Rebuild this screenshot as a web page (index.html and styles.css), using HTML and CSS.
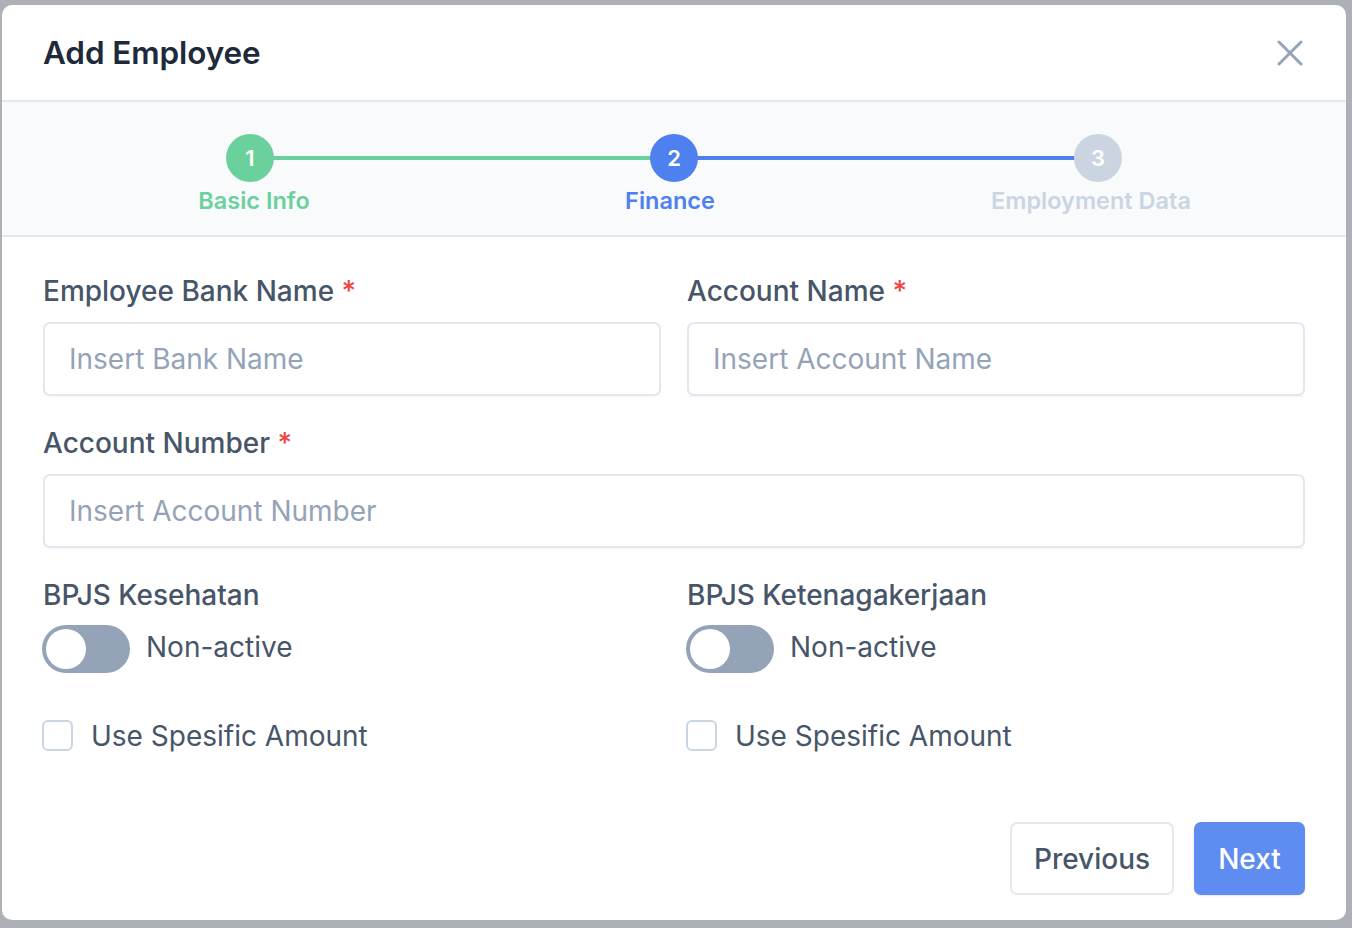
FILE: index.html
```html
<!DOCTYPE html>
<html lang="en">
<head>
<meta charset="utf-8">
<title>Add Employee</title>
<link rel="stylesheet" href="styles.css">
</head>
<body>
<div class="overlay">
  <div class="modal">
    <header class="modal-header">
      <h2 class="modal-title">Add Employee</h2>
      <button class="close-btn" aria-label="Close">
        <svg width="26" height="26" viewBox="0 0 26 26" fill="none" stroke="#94a3b8" stroke-width="3" stroke-linecap="round"><line x1="2" y1="2" x2="24" y2="24"/><line x1="24" y1="2" x2="2" y2="24"/></svg>
      </button>
    </header>

    <div class="stepper">
      <div class="step step-done">
        <div class="step-circle">1</div>
        <div class="step-label">Basic Info</div>
      </div>
      <div class="step step-active">
        <div class="step-circle">2</div>
        <div class="step-label">Finance</div>
      </div>
      <div class="step step-todo">
        <div class="step-circle">3</div>
        <div class="step-label">Employment Data</div>
      </div>
    </div>

    <div class="modal-body">
      <div class="row two">
        <div class="field">
          <label class="label">Employee Bank Name <span class="req">*</span></label>
          <input class="input" type="text" placeholder="Insert Bank Name">
        </div>
        <div class="field">
          <label class="label">Account Name <span class="req">*</span></label>
          <input class="input" type="text" placeholder="Insert Account Name">
        </div>
      </div>
      <div class="row">
        <div class="field">
          <label class="label">Account Number <span class="req">*</span></label>
          <input class="input" type="text" placeholder="Insert Account Number">
        </div>
      </div>
      <div class="row two bpjs">
        <div class="field">
          <div class="label plain">BPJS Kesehatan</div>
          <div class="toggle-row">
            <span class="toggle"><span class="knob"></span></span>
            <span class="toggle-text">Non-active</span>
          </div>
          <div class="check-row">
            <span class="checkbox"></span>
            <span class="check-text">Use Spesific Amount</span>
          </div>
        </div>
        <div class="field">
          <div class="label plain">BPJS Ketenagakerjaan</div>
          <div class="toggle-row">
            <span class="toggle"><span class="knob"></span></span>
            <span class="toggle-text">Non-active</span>
          </div>
          <div class="check-row">
            <span class="checkbox"></span>
            <span class="check-text">Use Spesific Amount</span>
          </div>
        </div>
      </div>
      <div class="footer">
        <button class="btn btn-secondary">Previous</button>
        <button class="btn btn-primary">Next</button>
      </div>
    </div>
  </div>
</div>
</body>
</html>
```

FILE: styles.css
```css
* { box-sizing: border-box; }

html, body {
  margin: 0;
  padding: 0;
  height: 928px;
  overflow: hidden;
}

body {
  background: #aeb0b7;
  font-family: Inter, "Noto Sans", sans-serif;
  color: #475569;
}

.overlay {
  padding: 5px 0 0 2px;
}

.modal {
  width: 1344px;
  height: 915px;
  background: #ffffff;
  border-radius: 10px;
  overflow: hidden;
  display: flex;
  flex-direction: column;
}

.modal-header {
  height: 97px;
  flex: none;
  display: flex;
  align-items: center;
  justify-content: space-between;
  padding: 0 43px 0 41px;
  border-bottom: 2px solid #e2e8f0;
}

.modal-title {
  margin: 0;
  font-size: 31.5px;
  font-weight: 600;
  color: #1e293b;
  letter-spacing: -0.1px;
}

.close-btn {
  border: 0;
  background: none;
  padding: 0;
  width: 26px;
  height: 26px;
  display: flex;
}

.stepper {
  flex: none;
  height: 135px;
  background: #f8fafc;
  border-bottom: 2px solid #e2e8f0;
  display: grid;
  grid-template-columns: repeat(3, 424px);
  padding: 32px 0 0 36px;
}

.step {
  position: relative;
  display: flex;
  flex-direction: column;
  align-items: center;
}

.step:not(:last-child)::after {
  content: "";
  position: absolute;
  top: 22px;
  left: 50%;
  width: 100%;
  height: 4px;
}

.step-done::after { background: #6bd19c; }
.step-active::after { background: #4f80ef; }

.step-circle {
  position: relative;
  z-index: 1;
  width: 48px;
  height: 48px;
  border-radius: 50%;
  color: #ffffff;
  font-size: 22px;
  font-weight: 600;
  display: flex;
  align-items: center;
  justify-content: center;
}

.step-label {
  margin-top: 5px;
  font-size: 23.5px;
  font-weight: 600;
  line-height: 28px;
}

.step-done .step-circle { background: #6bd19c; }
.step-done .step-label { color: #6bd19c; margin-left: 8px; }
.step-active .step-circle { background: #4f80ef; }
.step-active .step-label { color: #4f80ef; margin-right: 8px; }
.step-todo .step-circle { background: #cbd5e1; }
.step-todo .step-label { color: #cbd5e1; margin-right: 14px; }

.modal-body {
  flex: 1;
  padding: 38px 41px 25px 41px;
  display: flex;
  flex-direction: column;
}

.row { margin-bottom: 31px; }
.row.two {
  display: grid;
  grid-template-columns: 1fr 1fr;
  column-gap: 26px;
}

.field { display: flex; flex-direction: column; }

.label {
  display: block;
  font-size: 28px;
  line-height: 32px;
  font-weight: 500;
  color: #475569;
  margin-bottom: 15px;
}

.req { color: #ef4444; }

.input {
  height: 74px;
  width: 100%;
  border: 2px solid #e2e8f0;
  border-radius: 7px;
  padding: 0 24px;
  font-family: inherit;
  font-size: 28px;
  color: #1e293b;
  background: #fff;
  box-shadow: 0 1px 2px rgba(15, 23, 42, 0.05);
  outline: none;
}

.input::placeholder { color: #94a3b8; }

.label.plain { margin-bottom: 14px; }

.toggle-row {
  display: flex;
  align-items: center;
  gap: 16px;
  height: 48px;
  margin-left: -1px;
}

.toggle {
  width: 88px;
  height: 48px;
  border-radius: 24px;
  background: #94a3b8;
  position: relative;
  flex: none;
  display: flex;
  align-items: center;
  padding-left: 4px;
}

.knob {
  width: 40px;
  height: 40px;
  border-radius: 50%;
  background: #ffffff;
}

.toggle-text, .check-text {
  font-size: 28px;
  color: #475569;
}

.toggle-text { margin-top: -4px; }

.check-row {
  display: flex;
  align-items: center;
  gap: 18px;
  margin-top: 47px;
  height: 31px;
  margin-left: -1px;
}

.checkbox {
  width: 31px;
  height: 31px;
  border: 2px solid #cbd5e1;
  border-radius: 6px;
  background: #fff;
  flex: none;
}

.footer {
  margin-top: auto;
  display: flex;
  justify-content: flex-end;
  gap: 20px;
}

.btn {
  height: 73px;
  border-radius: 7px;
  font-family: inherit;
  font-size: 28px;
  font-weight: 500;
  padding: 0;
}

.btn-secondary {
  width: 164px;
  background: #ffffff;
  border: 2px solid #e5e7eb;
  color: #475569;
}

.btn-primary {
  width: 111px;
  background: #5f8cf0;
  border: 2px solid #5f8cf0;
  color: #ffffff;
  box-shadow: 0 1px 2px rgba(15,23,42,0.1);
}
```
